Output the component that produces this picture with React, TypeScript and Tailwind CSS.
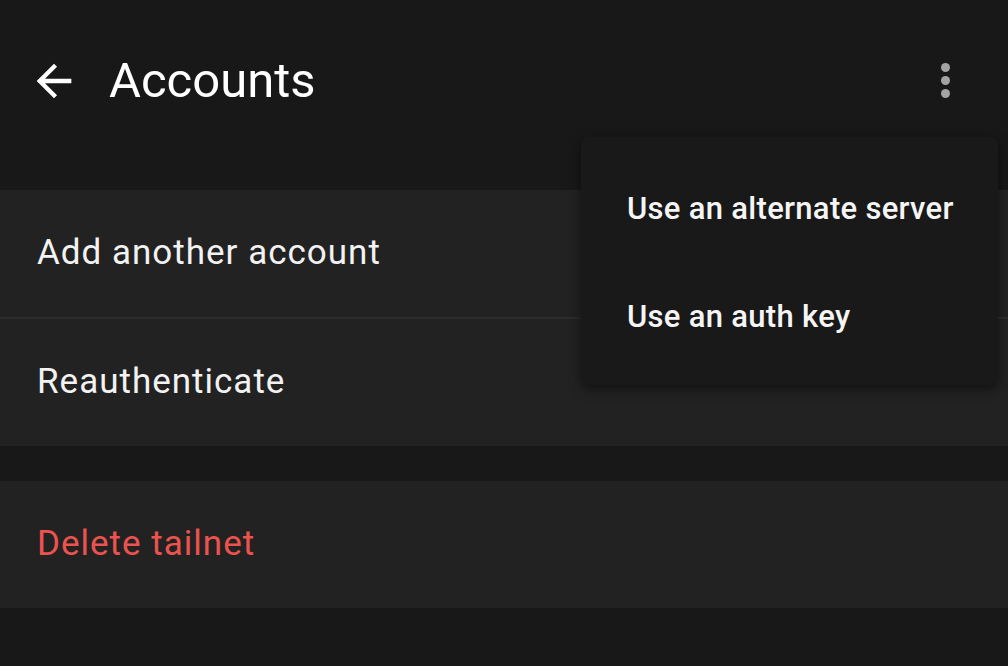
const Row = ({ label, danger }: { label: string; danger?: boolean }) => (
  <div className="h-[127px] bg-[#222222] flex items-center px-[37px]">
    <span
      className={`text-[35px] tracking-[1px] ${danger ? "text-[#ec534f]" : "text-[#f2f2f2]"}`}
    >
      {label}
    </span>
  </div>
);

const App = () => {
  return (
    <div
      className="w-[1008px] h-[666px] bg-[#181818] relative overflow-hidden"
      style={{ fontFamily: "Roboto, sans-serif" }}
    >
      <div className="h-[162px] flex items-start pt-[52px] pl-[28px] pr-[58px]">
        <svg width="52" height="52" viewBox="0 0 24 24" className="mt-[3px] fill-white">
          <path d="M20 11H7.83l5.59-5.59L12 4l-8 8 8 8 1.41-1.41L7.83 13H20v-2z" />
        </svg>
        <h1 className="ml-[29px] text-[49px] leading-[58px] text-white">Accounts</h1>
        <div className="ml-auto mt-[11px] flex flex-col gap-[4px] items-center">
          <span className="w-[9px] h-[9px] rounded-full bg-[#a3a3a3]" />
          <span className="w-[9px] h-[9px] rounded-full bg-[#a3a3a3]" />
          <span className="w-[9px] h-[9px] rounded-full bg-[#a3a3a3]" />
        </div>
      </div>

      <div className="mt-[28px]">
        <Row label="Add another account" />
        <div className="h-[2px] bg-[#2c2c2c]" />
        <Row label="Reauthenticate" />
      </div>

      <div className="mt-[35px]">
        <Row label="Delete tailnet" danger />
      </div>

      <div className="absolute left-[581px] top-[137px] w-[417px] rounded-[8px] bg-[#191919] pt-[18px] pb-[14px] shadow-[0_4px_12px_rgba(0,0,0,0.5)]">
        <div className="h-[108px] flex items-center pl-[46px] whitespace-nowrap text-[31px] tracking-[0.3px] font-medium text-[#f5f5f5]">
          Use an alternate server
        </div>
        <div className="h-[108px] flex items-center pl-[46px] whitespace-nowrap text-[31px] tracking-[0.3px] font-medium text-[#f5f5f5]">
          Use an auth key
        </div>
      </div>
    </div>
  );
};

export default App;
